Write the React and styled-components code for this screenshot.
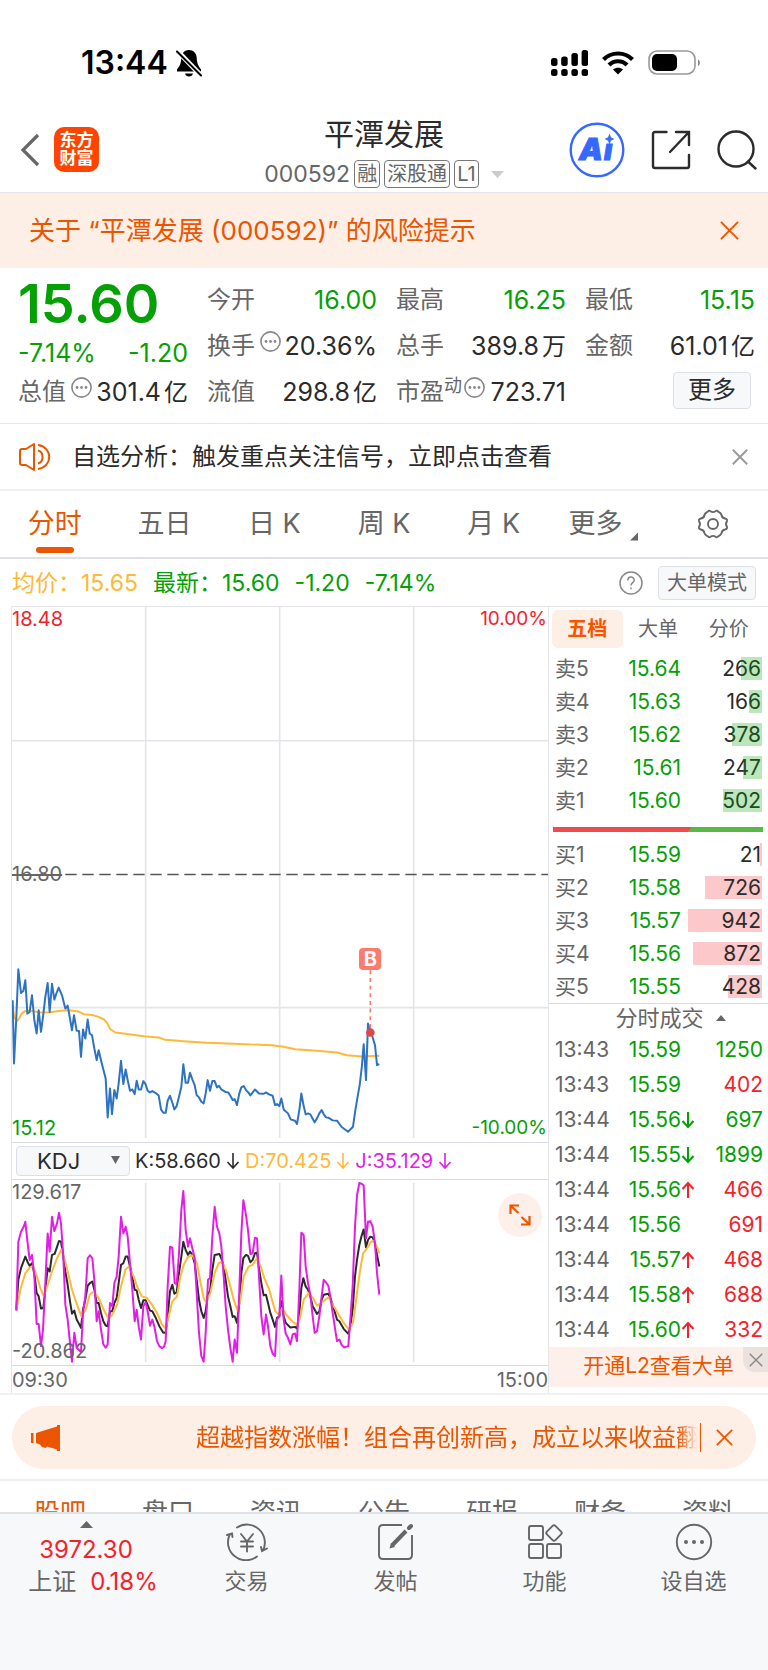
import React from 'react';
import styled, { createGlobalStyle } from 'styled-components';

const colors = {
  up: '#f5222a',
  down: '#05a005',
  accent: '#ec5500',
  peach: '#fdeee6',
  panel: '#f7f8fa',
  text: '#2b2b2b',
  muted: '#666',
  line: '#e3e5ea',
  avg: '#ffb937',
  price: '#2e73c2',
  j: '#e21ee6',
};

const GlobalStyle = createGlobalStyle`
  *, *::before, *::after { box-sizing: border-box; }
  body {
    margin: 0;
    background: #fff;
    color: ${colors.text};
    font-family: Inter, 'Noto Sans CJK SC', sans-serif;
    font-size: 24px;
    line-height: 32px;
  }
  button, select {
    margin: 0;
    padding: 0;
    border: 0;
    background: none;
    color: inherit;
    font: inherit;
  }
  svg { display: block; flex: none; }
  h1, p, dl, dd { margin: 0; }
`;

const Page = styled.main`
  display: flex;
  flex-direction: column;
  min-height: 100vh;
`;

/* ---------- status bar & header ---------- */

const StatusBar = styled.div`
  display: flex;
  align-items: center;
  justify-content: space-between;
  height: 108px;
  padding: 18px 67px 0 81px;
  color: #000;
`;

const StatusGroup = styled.div`
  display: flex;
  align-items: center;
  gap: ${(props) => props.$gap}px;
  font-size: 32px;
  font-weight: 600;
`;

const Header = styled.header`
  display: grid;
  grid-template-columns: 1fr auto 1fr;
  padding: 8px 0 4px;
  border-bottom: 1px solid ${colors.line};
`;

const HeaderSide = styled.div`
  display: flex;
  align-items: center;
  justify-content: ${(props) => (props.$end ? 'flex-end' : 'flex-start')};
  gap: ${(props) => props.$gap}px;
  padding: 0 11px 5px 20px;
`;

const IconButton = styled.button`
  display: flex;
  align-items: center;
  justify-content: center;
  color: ${(props) => props.$color || colors.text};
`;

const Logo = styled.div`
  width: 45px;
  height: 45px;
  padding: 4px 0;
  border-radius: 10px;
  background: #ff4400;
  color: #fff;
  font-size: 17px;
  font-weight: 700;
  line-height: 18px;
  text-align: center;
`;

const Title = styled.h1`
  font-size: 30px;
  font-weight: 400;
  line-height: 36px;
  text-align: center;
`;

const SubTitle = styled.div`
  display: flex;
  align-items: center;
  gap: 4px;
  margin-top: 8px;
  color: ${colors.muted};
  font-size: 23px;
  line-height: 28px;

  svg {
    margin-left: 8px;
  }
`;

const Tag = styled.span`
  height: 28px;
  padding: 0 2px;
  border: 1px solid #777;
  border-radius: 4px;
  font-size: 20px;
  line-height: 26px;
`;

const Alert = styled.section`
  display: flex;
  align-items: center;
  justify-content: space-between;
  height: 75px;
  padding: 0 29px;
  background: ${colors.peach};
  color: ${colors.accent};
  font-size: 26px;
`;

/* ---------- quote ---------- */

const Quote = styled.section`
  display: grid;
  grid-template-columns: repeat(4, 1fr);
  grid-template-rows: repeat(3, 46px);
  column-gap: 19px;
  padding: 9px 13px 8px 18px;
  border-bottom: 1px solid ${colors.line};
`;

const LastPrice = styled.div`
  grid-row: span 2;
  color: ${colors.down};

  strong {
    display: block;
    font-size: 54px;
    font-weight: 600;
    line-height: 54px;
  }
  p {
    display: flex;
    justify-content: space-between;
    margin-top: 6px;
    font-size: 25px;
  }
`;

const Stat = styled.dl`
  display: flex;
  align-items: center;
  white-space: nowrap;

  dt {
    display: flex;
    align-items: center;
    color: ${colors.muted};
  }
  dt svg {
    margin: 0 0 10px 5px;
  }
  dt sup {
    height: 32px;
    font-size: 18px;
    line-height: 20px;
  }
  dt sup + svg {
    margin-left: 2px;
  }
  dd {
    margin-left: auto;
    color: ${(props) => (props.$down ? colors.down : colors.text)};
    font-size: 25px;
  }
  dd span {
    margin-left: 3px;
    font-size: 24px;
  }
`;

const SmallButton = styled.button`
  height: ${(props) => props.$height || 34}px;
  padding: 0 ${(props) => props.$pad || 8}px;
  border: 1px solid #dcdfe6;
  border-radius: 4px;
  background: ${colors.panel};
  color: ${(props) => props.$color || colors.muted};
  font-size: ${(props) => props.$size || 20}px;
  line-height: 30px;
`;

const MoreCell = styled.div`
  display: flex;
  align-items: center;
  justify-content: flex-end;
  padding: 0 4px 4px 0;
`;

const Notice = styled.section`
  display: flex;
  align-items: center;
  gap: 21px;
  height: 67px;
  padding: 0 20px 0 18px;
  border-bottom: 2px solid #eff0f2;

  button {
    margin-left: auto;
  }
`;

/* ---------- period tabs ---------- */

const PeriodTabs = styled.nav`
  display: grid;
  grid-template-columns: repeat(7, 1fr);
  height: 68px;
  border-bottom: 2px solid #dfe1e6;
`;

const PeriodTab = styled.button`
  position: relative;
  display: flex;
  align-items: center;
  justify-content: center;
  color: ${(props) => (props.$active ? colors.accent : colors.muted)};
  font-size: 27px;
  white-space: nowrap;

  &::after {
    content: '';
    position: absolute;
    bottom: 4px;
    width: 38px;
    height: 6px;
    border-radius: 3px;
    background: ${(props) => (props.$active ? colors.accent : 'none')};
  }
  svg {
    margin: 24px 0 0 8px;
  }
`;

const InfoRow = styled.div`
  display: flex;
  align-items: center;
  gap: 15px;
  height: 47px;
  padding: 0 12px;
  color: ${colors.down};
  font-size: 23px;
  white-space: nowrap;
`;

const Average = styled.span`
  color: ${colors.avg};
`;

const HelpButton = styled(IconButton)`
  margin-left: auto;
`;

/* ---------- charts ---------- */

const Board = styled.section`
  display: grid;
  grid-template-columns: minmax(0, 1fr) 220px;
  padding-left: 11px;
  border-bottom: 2px solid #eff0f2;
`;

const Charts = styled.div`
  border-left: 1px solid ${colors.line};
  border-top: 1px solid ${colors.line};
`;

const Plot = styled.div`
  position: relative;
  height: ${(props) => props.$height}px;
  border-bottom: 1px solid #d8dae2;

  > svg {
    width: 100%;
    height: 100%;
  }
`;

const AxisLabel = styled.span`
  position: absolute;
  ${(props) => (props.$right ? 'right: 1px;' : 'left: 0;')}
  ${(props) => (props.$bottom ? 'bottom: 2px;' : 'top: 0;')}
  color: ${(props) => props.$color || colors.muted};
  font-size: ${(props) => (props.$right ? 19 : 20)}px;
  line-height: 24px;
`;

const BaseLabel = styled(AxisLabel)`
  top: 50%;
  margin-top: -13px;
  text-decoration: line-through;
`;

const BuyFlag = styled.span`
  position: absolute;
  top: 64%;
  left: 62%;
  display: flex;
  align-items: center;
  justify-content: center;
  width: 22px;
  height: 22px;
  margin: -1px 0 0 15px;
  border-radius: 4px;
  background: #ff7a6b;
  color: #fff;
  font-size: 20px;
  font-weight: 700;
`;

const IndicatorRow = styled.div`
  display: flex;
  align-items: center;
  gap: 5px;
  height: 37px;
  padding-left: 4px;
  border-bottom: 1px solid #d8dae2;
  font-size: 20px;
  white-space: nowrap;
`;

const IndicatorPicker = styled.label`
  position: relative;
  display: flex;

  select {
    width: 114px;
    height: 30px;
    padding-left: 20px;
    border: 1px solid #dcdfe6;
    border-radius: 4px;
    background: ${colors.panel};
    color: ${colors.text};
    font-size: 22px;
    line-height: 28px;
    appearance: none;
  }
  svg {
    position: absolute;
    top: 10px;
    right: 10px;
    pointer-events: none;
  }
`;

const Reading = styled.span`
  display: flex;
  align-items: center;
  gap: 5px;
  color: ${(props) => props.$color};
`;

const ExpandButton = styled(IconButton)`
  position: absolute;
  top: 13px;
  right: 6px;
  width: 44px;
  height: 44px;
  border-radius: 50%;
  background: #fdf0ea;
`;

const TimeAxis = styled.div`
  display: flex;
  justify-content: space-between;
  height: 27px;
  color: ${colors.muted};
  font-size: 20px;
  line-height: 29px;
`;

/* ---------- order book ---------- */

const Side = styled.aside`
  border-left: 1px solid ${colors.line};
  border-top: 1px solid ${colors.line};
  padding-top: 3px;
`;

const SideTabs = styled.div`
  display: grid;
  grid-template-columns: repeat(3, 1fr);
  margin: 0 4px 4px 3px;
`;

const SideTab = styled.button`
  height: 38px;
  border-radius: 6px;
  background: ${(props) => (props.$active ? colors.peach : 'none')};
  color: ${(props) => (props.$active ? '#f75400' : colors.muted)};
  font-size: 20px;
  font-weight: ${(props) => (props.$active ? 700 : 400)};
`;

const Table = styled.table`
  width: 100%;
  border-collapse: collapse;
  table-layout: fixed;
  font-size: 21px;
  line-height: 24px;

  tr {
    height: ${(props) => props.$row}px;
  }
  th,
  td {
    padding: 0;
    font-weight: 400;
    text-align: right;
  }
  th {
    width: 60px;
    padding-left: 6px;
    color: ${colors.muted};
    text-align: left;
    white-space: nowrap;
  }
`;

const LevelPrice = styled.td`
  width: 72px;
  color: ${colors.down};
`;

const LevelVolume = styled.td`
  position: relative;

  span {
    position: relative;
    z-index: ${(props) => (props.$sell ? 0 : 1)};
    padding-right: 7px;
  }
  i {
    position: absolute;
    top: 5px;
    right: 6px;
    height: 23px;
    background: ${(props) => (props.$sell ? '#05a00544' : '#fcc8ca')};
  }
`;

const Ratio = styled.div`
  display: flex;
  height: 5px;
  margin: 10px 5px 6px 4px;
  background: #58b947;

  &::before {
    content: '';
    width: 66%;
    background: #ee4b4b;
    clip-path: polygon(0 0, 100% 0, calc(100% - 4px) 100%, 0 100%);
  }
`;

const TradesTitle = styled.button`
  display: flex;
  align-items: center;
  justify-content: center;
  gap: 12px;
  width: 100%;
  height: 29px;
  padding-left: 24px;
  border-top: 1px solid #d8dae2;
  color: ${colors.muted};
  font-size: 22px;
`;

const TradePrice = styled.td`
  width: 86px;
  color: ${colors.down};

  div {
    display: flex;
    align-items: center;
    justify-content: flex-end;
  }
`;

const ArrowSlot = styled.span`
  width: 14px;
  color: ${(props) => (props.$up ? colors.up : colors.down)};
`;

const TradeVolume = styled.td`
  color: ${(props) => (props.$up ? colors.up : colors.down)};

  span {
    padding-right: 5px;
  }
`;

const LevelTwo = styled.div`
  position: relative;
  height: 40px;
  margin-bottom: 5px;
  background: #fdf0ea;
  text-align: center;

  a {
    color: ${colors.accent};
    font-size: 21px;
    line-height: 38px;
    text-decoration: none;
  }
  button {
    position: absolute;
    top: 0;
    right: 0;
    width: 25px;
    height: 25px;
    border-bottom-left-radius: 12px;
    background: #ebe2de;
  }
`;

/* ---------- promo & bottom ---------- */

const PromoWrap = styled.section`
  padding: 11px 12px 10px;
  border-bottom: 2px solid #eff0f2;
`;

const Promo = styled.div`
  display: flex;
  align-items: center;
  height: 63px;
  padding: 0 23px 0 18px;
  border-radius: 32px;
  background: ${colors.peach};
  color: ${colors.accent};
`;

const Marquee = styled.p`
  flex: 1;
  margin-left: 136px;
  overflow: hidden;
  font-size: 24px;
  white-space: nowrap;
  mask-image: linear-gradient(to left, transparent, #000 20px);
`;

const Divider = styled.i`
  width: 1px;
  height: 29px;
  margin: 0 15px 0 2px;
  background: ${colors.accent};
`;

const SectionTabs = styled.nav`
  display: grid;
  grid-template-columns: repeat(7, 1fr);
  height: 31px;
  padding: 13px 6px 0;
  overflow: hidden;
`;

const SectionTab = styled.button`
  height: 38px;
  color: ${(props) => (props.$active ? colors.accent : colors.muted)};
  font-size: 26px;
  line-height: 38px;
`;

const BottomBar = styled.footer`
  display: grid;
  flex: 1;
  grid-template-columns: 172px repeat(4, 1fr);
  align-items: start;
  min-height: 159px;
  border-top: 2px solid #dfe2e8;
  background: ${colors.panel};
`;

const IndexButton = styled.button`
  display: flex;
  flex-direction: column;
  align-items: center;
  padding-top: 7px;
  color: ${colors.up};

  svg {
    margin-bottom: 6px;
    color: ${colors.muted};
  }
  span {
    display: flex;
    gap: 14px;
    padding-left: 14px;
  }
  em {
    color: ${colors.muted};
    font-style: normal;
  }
`;

const ActionButton = styled.button`
  display: flex;
  flex-direction: column;
  align-items: center;
  gap: 4px;
  padding-top: 9px;
  color: ${colors.muted};
  font-size: 22px;
`;

/* ---------- icons ---------- */

const Close = ({ size, width = 2 }) => (
  <svg width={size} height={size} viewBox="0 0 20 20" fill="none" stroke="currentColor" strokeWidth={width}>
    <path d="M1 1 19 19M19 1 1 19" />
  </svg>
);

const Dots = () => (
  <svg width="21" height="21" viewBox="0 0 21 21" fill="#888">
    <circle cx="10.5" cy="10.5" r="9.6" fill="none" stroke="#888" strokeWidth="1.6" />
    <circle cx="6" cy="10.5" r="1.4" />
    <circle cx="10.5" cy="10.5" r="1.4" />
    <circle cx="15" cy="10.5" r="1.4" />
  </svg>
);

const Triangle = ({ width, height, up, color = 'currentColor' }) => (
  <svg width={width} height={height} viewBox="0 0 12 6" preserveAspectRatio="none" fill={color}>
    <path d={up ? 'M0 6 6 0 12 6Z' : 'M0 0H12L6 6Z'} />
  </svg>
);

const Arrow = ({ up, width = 2 }) => (
  <svg width="14" height="18" viewBox="0 0 14 18" fill="none" stroke="currentColor" strokeWidth={width}>
    <path d={up ? 'M7 17V2M1.500 8 7 2 12.500 8' : 'M7 1V16M1.500 10 7 16 12.500 10'} />
  </svg>
);

const BellOff = () => (
  <svg width="26" height="28" viewBox="0 0 26 28">
    <path d="M13 1C8.500 1 5.500 4.500 5.300 9C5.100 14 4 16.500 1 20.500V22.500H25V20.500C22 16.500 21 14 20.700 9C20.500 4.500 17.500 1 13 1Z" />
    <path d="M9 24.500H17C16.500 26.500 15 27.500 13 27.500S9.500 26.500 9 24.500Z" />
    <path d="M0 .5 26 27.500" stroke="#fff" strokeWidth="5" />
    <path d="M1 2.500 25 26.500" stroke="#000" strokeWidth="2" strokeLinecap="round" />
  </svg>
);

const Signal = () => (
  <svg width="37" height="28" viewBox="0 0 37 28">
    {[9, 7.500, 4, 1].map((top, i) => (
      <g key={top}>
        <rect x={i * 10.200} y={top} width="6.500" height={17 - top} rx="2.500" />
        <rect x={i * 10.200} y="20" width="6.500" height="7" rx="2.500" />
      </g>
    ))}
  </svg>
);

const Wifi = () => (
  <svg width="32" height="24" viewBox="0 0 32 24" fill="none" stroke="#000" strokeWidth="4.200">
    <path d="M1.500 8.500C9.500 .5 22.500 .5 30.500 8.500" />
    <path d="M7 14C12 9 20 9 25 14" />
    <path d="M11 18.500C14 16 18 16 21 18.500L16 23.500Z" fill="#000" stroke="none" />
  </svg>
);

const Battery = () => (
  <svg width="53" height="26" viewBox="0 0 53 26">
    <rect x="1" y="1" width="46" height="23" rx="8" fill="none" stroke="#999" strokeWidth="1.600" />
    <rect x="4" y="4" width="25" height="17" rx="5" />
    <path d="M50 9.500C52.500 10.500 52.500 15 50 16Z" fill="#888" />
  </svg>
);

const Back = () => (
  <svg width="20" height="34" viewBox="0 0 20 34" fill="none" stroke="#666" strokeWidth="3.200">
    <path d="M18 2 3 17 18 32" />
  </svg>
);

const Ai = () => (
  <svg width="56" height="56" viewBox="0 0 56 56" fill="#3568ff">
    <circle cx="28" cy="28" r="26.300" fill="none" stroke="#3568ff" strokeWidth="2.400" />
    <text x="10" y="38" fontFamily="Inter" fontSize="30" fontWeight="900" fontStyle="italic" stroke="#3568ff">
      A
    </text>
    <text x="35" y="38" fontFamily="Inter" fontSize="28" fontWeight="900" fontStyle="italic" stroke="#3568ff">
      ı
    </text>
    <path d="M40.500 12.500C41.200 15.500 42 16.300 44.500 17C42 17.700 41.200 18.500 40.500 21.500C39.800 18.500 39 17.700 36.500 17C39 16.300 39.800 15.500 40.500 12.500Z" stroke="#3568ff" />
  </svg>
);

const Share = () => (
  <svg width="40" height="40" viewBox="0 0 40 40" fill="none" stroke="currentColor" strokeWidth="2.400" strokeLinecap="round">
    <path d="M15.500 2H4Q2 2 2 4V36Q2 38 4 38H36Q38 38 38 36V25" />
    <path d="M25 2H38V15M38 2 19 22" />
  </svg>
);

const Search = () => (
  <svg width="40" height="40" viewBox="0 0 40 40" fill="none" stroke="currentColor" strokeWidth="2.400" strokeLinecap="round">
    <circle cx="19" cy="19" r="17.500" />
    <path d="M31 31.500 38.500 38.500" />
  </svg>
);

const Speaker = () => (
  <svg width="33" height="28" viewBox="0 0 33 28" fill="none" stroke={colors.accent} strokeWidth="2" strokeLinejoin="round">
    <path d="M16 1V27L8 22H4Q2 22 2 20V8Q2 6 4 6H8Z" />
    <path d="M20 7.500C26 9 26 19 20 20.500M20 2C35 4 35 24 20 26" />
  </svg>
);

const Gear = () => (
  <svg width="32" height="30" viewBox="0 0 32 30" fill="none" stroke="currentColor" strokeWidth="1.900" strokeLinejoin="round">
    <path d="M11 2.500Q12 1 13.500 2.200Q16 4 18.500 2.200Q20 1 21 2.500L22.500 3.500Q24 4 24.500 6Q25 9 28 9.500Q30.500 10 30 12Q28 15 30 18Q30.500 20 28 20.500Q25 21 24.500 24Q24 26 22.500 26.500L21 27.500Q20 29 18.500 27.800Q16 26 13.500 27.800Q12 29 11 27.500L9.500 26.500Q8 26 7.500 24Q7 21 4 20.500Q1.500 20 2 18Q4 15 2 12Q1.500 10 4 9.500Q7 9 7.500 6Q8 4 9.500 3.500Z" />
    <circle cx="16" cy="15" r="5" />
  </svg>
);

const Corner = () => (
  <svg width="8" height="9" viewBox="0 0 9 9" fill="currentColor">
    <path d="M9 0V9H0Z" />
  </svg>
);

const Help = () => (
  <svg width="24" height="24" viewBox="0 0 24 24" fill="none" stroke="#888" strokeWidth="1.500">
    <circle cx="12" cy="12" r="11" />
    <path d="M8.800 9.500C8.800 5 15.200 5 15.200 9.200C15.200 11.500 12 11.800 12 14.500M12 16.500V18.200" />
  </svg>
);

const Expand = () => (
  <svg width="22" height="22" viewBox="0 0 22 22" fill="none" stroke={colors.accent} strokeWidth="2.200">
    <path d="M1.500 10V1.500H10M1.500 1.500 9.500 9M20.500 12V20.500H12M20.500 20.500 12.500 13" />
  </svg>
);

const Megaphone = () => (
  <svg width="30" height="26" viewBox="0 0 30 26" fill={colors.accent}>
    <path d="M1 8H3.500V18H1ZM6 8 27 1.500V0H30V26H27V24.500L17 21.500 16 23 12 22 10 19.500 6 18Z" />
  </svg>
);

const Trade = () => (
  <svg width="42" height="38" viewBox="0 0 42 38" fill="none" stroke="currentColor" strokeWidth="1.900" strokeLinecap="round">
    <path d="M11 4.500A18 18 0 0 1 37 27.500M31 33.500A18 18 0 0 1 4 11M1 12 6 10.500 6.500 14M41 25.500 36 28 35 24" />
    <path d="M15 11 21 18.500 27 11M15 18.500H27M15 23.500H27M21 18.500V28.500" />
  </svg>
);

const Post = () => (
  <svg width="38" height="38" viewBox="0 0 38 38" fill="none" stroke="currentColor" strokeWidth="1.900">
    <path d="M25 2H6Q2 2 2 6V32Q2 36 6 36H31Q35 36 35 32V12" />
    <path d="M29 8 15 22.500" strokeWidth="4" />
    <path d="M12.500 25.500 14 20 18 24Z" fill="currentColor" stroke="none" />
    <path d="M32 5 34 3" strokeWidth="4" strokeLinecap="round" />
  </svg>
);

const Features = () => (
  <svg width="36" height="38" viewBox="0 0 36 38" fill="none" stroke="currentColor" strokeWidth="1.900">
    <rect x="2" y="3" width="14" height="14" rx="2" />
    <rect x="2" y="21" width="14" height="14" rx="2" />
    <rect x="20" y="21" width="14" height="14" rx="2" />
    <rect x="21" y="4" width="12" height="12" rx="2" transform="rotate(45 27 10)" />
  </svg>
);

const Favorite = () => (
  <svg width="38" height="38" viewBox="0 0 38 38" fill="currentColor">
    <circle cx="19" cy="19" r="17.200" fill="none" stroke="currentColor" strokeWidth="1.900" />
    <circle cx="11" cy="19" r="2" />
    <circle cx="19" cy="19" r="2" />
    <circle cx="27" cy="19" r="2" />
  </svg>
);

/* ---------- data ---------- */

const stats = [
  { label: '今开', value: '16.00', down: true },
  { label: '最高', value: '16.25', down: true },
  { label: '最低', value: '15.15', down: true },
  { label: '换手', value: '20.36%', info: true },
  { label: '总手', value: '389.8', unit: '万' },
  { label: '金额', value: '61.01', unit: '亿' },
  { label: '总值', value: '301.4', unit: '亿', info: true },
  { label: '流值', value: '298.8', unit: '亿' },
  { label: '市盈', sup: '动', value: '723.71', info: true },
];

const periods = ['分时', '五日', '日 K', '周 K', '月 K', '更多'];
const sections = ['股吧', '盘口', '资讯', '公告', '研报', '财务', '资料'];

const asks = [
  ['卖5', '15.64', 266],
  ['卖4', '15.63', 166],
  ['卖3', '15.62', 378],
  ['卖2', '15.61', 247],
  ['卖1', '15.60', 502],
];

const bids = [
  ['买1', '15.59', 21],
  ['买2', '15.58', 726],
  ['买3', '15.57', 942],
  ['买4', '15.56', 872],
  ['买5', '15.55', 428],
];

const trades = [
  { time: '13:43', price: '15.59', volume: 1250 },
  { time: '13:43', price: '15.59', volume: 402, buy: true },
  { time: '13:44', price: '15.56', volume: 697, move: 'down' },
  { time: '13:44', price: '15.55', volume: 1899, move: 'down' },
  { time: '13:44', price: '15.56', volume: 466, move: 'up', buy: true },
  { time: '13:44', price: '15.56', volume: 691, buy: true },
  { time: '13:44', price: '15.57', volume: 468, move: 'up', buy: true },
  { time: '13:44', price: '15.58', volume: 688, move: 'up', buy: true },
  { time: '13:44', price: '15.60', volume: 332, move: 'up', buy: true },
];

const actions = [
  ['交易', Trade],
  ['发帖', Post],
  ['功能', Features],
  ['设自选', Favorite],
];

const priceLine =
  '37,300 41,490 48,350 54,207 62,278 69,272 75,240 81,340 88,335 95,285 102,360 109,400 115,330 122,395 128,350 135,290 142,248 148,335 155,250 162,298 168,280 175,262 185,285 195,325 202,316 209,355 215,390 221,345 229,392 236,392 242,470 248,388 255,415 262,358 268,400 275,405 282,445 289,480 295,450 302,480 309,508 316,535 322,652 329,565 335,642 342,570 349,595 355,550 362,482 369,552 376,508 382,540 389,572 396,568 403,582 409,542 415,568 422,568 429,543 436,553 442,572 449,577 456,573 465,578 475,586 482,628 489,638 496,638 502,602 509,587 516,608 522,628 529,618 536,590 543,560 549,492 556,548 563,548 569,518 576,538 583,555 589,585 596,592 603,605 610,610 616,580 622,540 629,572 636,543 643,543 650,562 656,557 663,568 676,576 684,577 690,587 697,600 703,597 710,615 717,580 723,562 730,558 737,570 744,577 750,586 757,577 764,568 776,580 790,581 797,577 806,583 817,587 824,615 830,612 837,618 843,595 850,628 863,640 871,658 884,662 890,672 897,630 903,580 910,618 916,643 923,640 930,643 937,656 943,667 950,655 957,640 964,630 970,642 977,652 984,653 997,661 1010,662 1024,681 1043,695 1058,680 1064,637 1071,595 1078,555 1084,505 1090,432 1097,540 1103,370 1108,385 1113,400 1118,415 1124,435 1130,495 1137,492';

const averageLine =
  '37,315 42,352 50,362 56,355 64,340 75,332 88,331 100,333 120,337 150,336 175,332 205,330 235,334 250,342 275,344 295,350 310,357 320,368 330,387 345,397 370,400 430,408 475,412 495,419 560,424 620,428 700,431 815,435 850,440 885,447 950,452 1010,457 1040,465 1085,469 1137,467';

const jLine =
  '48,543 54,335 62,305 70,290 75,275 82,340 88,390 95,375 102,440 109,583 115,583 122,650 128,600 135,460 142,310 148,365 155,260 162,303 170,280 176,248 182,280 189,380 195,525 202,570 209,640 215,697 222,610 229,655 242,668 248,550 255,500 262,385 269,376 276,385 282,450 289,575 295,545 302,600 309,645 316,655 322,645 329,520 336,530 342,460 349,440 355,380 362,260 369,310 376,290 382,320 389,400 396,480 403,575 409,540 415,590 422,630 429,530 436,518 442,545 449,588 456,570 462,590 470,635 477,650 485,656 491,652 496,635 502,470 509,350 516,353 523,460 529,463 536,370 543,240 549,182 556,300 563,350 569,325 576,355 583,385 589,490 596,610 603,680 610,697 616,610 623,450 629,445 636,320 643,230 650,290 657,310 663,350 670,440 676,530 683,600 690,655 697,697 703,630 710,670 717,480 723,310 729,210 737,255 743,300 750,372 757,370 764,323 770,325 776,440 783,560 790,615 797,555 803,590 810,650 817,673 824,680 830,570 837,560 843,437 850,570 856,612 863,625 870,645 877,615 884,612 890,635 897,480 903,308 910,315 916,410 923,460 930,495 937,560 943,610 950,605 957,560 964,500 970,450 977,458 984,468 990,500 997,550 1003,590 1010,635 1017,630 1024,647 1032,654 1044,650 1050,570 1057,470 1064,290 1070,195 1077,158 1083,160 1090,165 1097,325 1103,275 1110,273 1117,290 1124,340 1130,430 1137,495';

const kLine =
  '48,540 54,450 62,415 75,380 82,397 88,408 95,400 102,430 109,490 115,500 122,537 129,535 135,480 142,415 148,425 155,375 163,372 176,333 182,335 189,380 195,425 202,465 209,515 215,552 222,543 229,570 236,583 242,595 248,540 255,510 262,468 269,460 276,455 282,480 289,520 295,520 302,550 309,575 316,588 322,590 329,545 336,545 342,520 349,505 355,460 362,405 369,400 376,380 382,380 389,410 396,440 403,480 409,482 415,510 422,535 429,512 436,512 449,543 456,545 465,562 477,590 489,610 496,610 502,560 509,485 516,465 522,492 529,488 536,430 543,380 549,335 556,360 563,375 569,365 576,375 583,400 589,450 596,510 603,545 610,565 616,545 623,490 629,485 636,420 643,375 657,372 663,385 670,410 676,450 683,500 690,530 697,562 703,560 710,580 717,520 723,430 729,385 737,375 743,378 750,397 757,390 764,370 770,368 776,415 783,460 790,497 797,495 803,520 810,550 817,570 824,592 830,565 837,560 843,515 850,560 856,580 870,594 884,592 890,597 897,550 903,475 909,445 916,470 923,480 930,500 937,530 943,540 950,553 957,545 964,510 970,495 984,492 990,505 997,525 1010,570 1017,575 1030,598 1044,613 1050,590 1057,540 1064,440 1070,390 1077,345 1083,320 1090,298 1097,352 1103,330 1110,320 1117,322 1124,340 1130,375 1137,410';

const dLine =
  '48,543 60,480 75,430 88,413 98,408 108,435 120,475 130,500 142,465 155,425 170,385 184,358 196,400 215,480 230,525 244,562 256,540 268,495 280,485 295,505 310,540 325,568 336,555 350,525 362,470 375,420 386,410 400,440 412,475 425,500 440,505 455,525 470,550 485,585 496,597 505,560 516,515 530,500 540,440 550,405 562,382 576,376 590,400 600,455 610,505 617,518 630,490 643,430 655,400 665,395 678,425 690,470 700,510 711,542 720,510 730,440 745,410 757,405 770,385 783,415 792,445 805,475 815,510 825,545 835,555 845,535 858,555 875,575 892,588 900,560 910,510 925,490 938,505 950,528 963,520 985,502 1000,530 1015,555 1030,580 1046,600 1058,580 1066,520 1078,430 1088,370 1100,355 1112,335 1120,333 1130,350 1137,370';

const Series = ({ points, color }) => (
  <polyline points={points} fill="none" stroke={color} strokeWidth="6" strokeLinejoin="round" />
);

/* ---------- sections ---------- */

function PriceChart() {
  return (
    <Plot $height={536}>
      <svg viewBox="0 0 1608 1608" preserveAspectRatio="none">
        <path d="M401 0V1596M803 0V1596M1205 0V1596M0 402H1608M0 1204H1608" stroke={colors.line} strokeWidth="5" />
        <path d="M160 804H1608" stroke="#555" strokeWidth="4" strokeDasharray="34 17" />
        <g transform="translate(-35 882)">
          <Series points={averageLine} color={colors.avg} />
          <Series points={priceLine} color={colors.price} />
          <path d="M1110 210V390" stroke="#ff7a6b" strokeWidth="5" strokeDasharray="12 11" />
          <circle cx="1110" cy="397" r="13" fill="#e04848" />
        </g>
      </svg>
      <AxisLabel $color={colors.up}>18.48</AxisLabel>
      <AxisLabel $right $color={colors.up}>
        10.00%
      </AxisLabel>
      <BaseLabel>16.80</BaseLabel>
      <AxisLabel $bottom $color={colors.down}>
        15.12
      </AxisLabel>
      <AxisLabel $bottom $right $color={colors.down}>
        -10.00%
      </AxisLabel>
      <BuyFlag>B</BuyFlag>
    </Plot>
  );
}

function KdjChart() {
  return (
    <Plot $height={186}>
      <svg viewBox="0 0 1608 558" preserveAspectRatio="none">
        <path d="M401 8V550M803 8V550M1205 8V550" stroke={colors.line} strokeWidth="5" />
        <g transform="translate(-35 -149)">
          <Series points={kLine} color="#2a2a2a" />
          <Series points={dLine} color={colors.avg} />
          <Series points={jLine} color={colors.j} />
        </g>
      </svg>
      <AxisLabel>129.617</AxisLabel>
      <AxisLabel $bottom>-20.862</AxisLabel>
      <ExpandButton aria-label="全屏">
        <Expand />
      </ExpandButton>
    </Plot>
  );
}

function Levels({ rows, sell }) {
  return (
    <Table $row={33}>
      <tbody>
        {rows.map(([label, price, volume]) => (
          <tr key={label}>
            <th scope="row">{label}</th>
            <LevelPrice>{price}</LevelPrice>
            <LevelVolume $sell={sell}>
              <span>{volume}</span>
              <i style={{ width: Math.round((volume / 942) * 74) }} />
            </LevelVolume>
          </tr>
        ))}
      </tbody>
    </Table>
  );
}

function OrderBook() {
  return (
    <Side>
      <SideTabs>
        <SideTab $active>五档</SideTab>
        <SideTab>大单</SideTab>
        <SideTab>分价</SideTab>
      </SideTabs>
      <Levels rows={asks} sell />
      <Ratio />
      <Levels rows={bids} />
      <TradesTitle>
        分时成交
        <Triangle width={10} height={6} up />
      </TradesTitle>
      <Table $row={35}>
        <tbody>
          {trades.map((trade, i) => (
            <tr key={i}>
              <th scope="row">{trade.time}</th>
              <TradePrice>
                <div>
                  {trade.price}
                  <ArrowSlot $up={trade.move === 'up'}>
                    {trade.move && <Arrow up={trade.move === 'up'} />}
                  </ArrowSlot>
                </div>
              </TradePrice>
              <TradeVolume $up={trade.buy}>
                <span>{trade.volume}</span>
              </TradeVolume>
            </tr>
          ))}
        </tbody>
      </Table>
      <LevelTwo>
        <a href="#l2">开通L2查看大单</a>
        <IconButton aria-label="关闭" $color="#888">
          <Close size={14} />
        </IconButton>
      </LevelTwo>
    </Side>
  );
}

const StatItem = ({ label, sup, value, unit, info, down }) => (
  <Stat $down={down}>
    <dt>
      {label}
      {sup && <sup>{sup}</sup>}
      {info && <Dots />}
    </dt>
    <dd>
      {value}
      {unit && <span>{unit}</span>}
    </dd>
  </Stat>
);

export default function App() {
  return (
    <Page>
      <GlobalStyle />
      <StatusBar>
        <StatusGroup $gap={8}>
          13:44
          <BellOff />
        </StatusGroup>
        <StatusGroup $gap={14}>
          <Signal />
          <Wifi />
          <Battery />
        </StatusGroup>
      </StatusBar>

      <Header>
        <HeaderSide $gap={14}>
          <IconButton aria-label="返回">
            <Back />
          </IconButton>
          <Logo>
            东方
            <br />
            财富
          </Logo>
        </HeaderSide>
        <div>
          <Title>平潭发展</Title>
          <SubTitle>
            000592
            <Tag>融</Tag>
            <Tag>深股通</Tag>
            <Tag>L1</Tag>
            <Triangle width={13} height={7} color="#ccc" />
          </SubTitle>
        </div>
        <HeaderSide $end $gap={26}>
          <IconButton aria-label="智能助手">
            <Ai />
          </IconButton>
          <IconButton aria-label="分享">
            <Share />
          </IconButton>
          <IconButton aria-label="搜索">
            <Search />
          </IconButton>
        </HeaderSide>
      </Header>

      <Alert>
        <p>关于 “平潭发展 (000592)” 的风险提示</p>
        <IconButton aria-label="关闭" $color={colors.accent}>
          <Close size={19} />
        </IconButton>
      </Alert>

      <Quote>
        <LastPrice>
          <strong>15.60</strong>
          <p>
            <span>-7.14%</span>
            <span>-1.20</span>
          </p>
        </LastPrice>
        {stats.map((stat) => (
          <StatItem key={stat.label} {...stat} />
        ))}
        <MoreCell>
          <SmallButton $height={37} $pad={14} $size={24} $color={colors.text}>
            更多
          </SmallButton>
        </MoreCell>
      </Quote>

      <Notice>
        <Speaker />
        <p>自选分析：触发重点关注信号，立即点击查看</p>
        <IconButton aria-label="关闭" $color="#999">
          <Close size={16} width={2.4} />
        </IconButton>
      </Notice>

      <PeriodTabs>
        {periods.map((name, i) => (
          <PeriodTab key={name} $active={i === 0}>
            {name}
            {name === '更多' && <Corner />}
          </PeriodTab>
        ))}
        <IconButton aria-label="设置" $color={colors.muted}>
          <Gear />
        </IconButton>
      </PeriodTabs>

      <InfoRow>
        <Average>均价：15.65</Average>
        <span>最新：15.60</span>
        <span>-1.20</span>
        <span>-7.14%</span>
        <HelpButton aria-label="帮助">
          <Help />
        </HelpButton>
        <SmallButton>大单模式</SmallButton>
      </InfoRow>

      <Board>
        <Charts>
          <PriceChart />
          <IndicatorRow>
            <IndicatorPicker aria-label="指标">
              <select defaultValue="KDJ">
                <option>KDJ</option>
                <option>MACD</option>
                <option>RSI</option>
              </select>
              <Triangle width={9} height={8} color="#666" />
            </IndicatorPicker>
            <Reading $color={colors.text}>
              K:58.660 <Arrow width={1.6} />
            </Reading>
            <Reading $color={colors.avg}>
              D:70.425 <Arrow width={1.6} />
            </Reading>
            <Reading $color={colors.j}>
              J:35.129 <Arrow width={1.6} />
            </Reading>
          </IndicatorRow>
          <KdjChart />
          <TimeAxis>
            <span>09:30</span>
            <span>15:00</span>
          </TimeAxis>
        </Charts>
        <OrderBook />
      </Board>

      <PromoWrap>
        <Promo>
          <Megaphone />
          <Marquee>超越指数涨幅！组合再创新高，成立以来收益翻倍</Marquee>
          <Divider />
          <IconButton aria-label="关闭" $color={colors.accent}>
            <Close size={17} />
          </IconButton>
        </Promo>
      </PromoWrap>

      <SectionTabs>
        {sections.map((name, i) => (
          <SectionTab key={name} $active={i === 0}>
            {name}
          </SectionTab>
        ))}
      </SectionTabs>

      <BottomBar>
        <IndexButton>
          <Triangle width={13} height={7} up />
          3972.30
          <span>
            <em>上证</em>0.18%
          </span>
        </IndexButton>
        {actions.map(([label, Icon]) => (
          <ActionButton key={label}>
            <Icon />
            {label}
          </ActionButton>
        ))}
      </BottomBar>
    </Page>
  );
}
